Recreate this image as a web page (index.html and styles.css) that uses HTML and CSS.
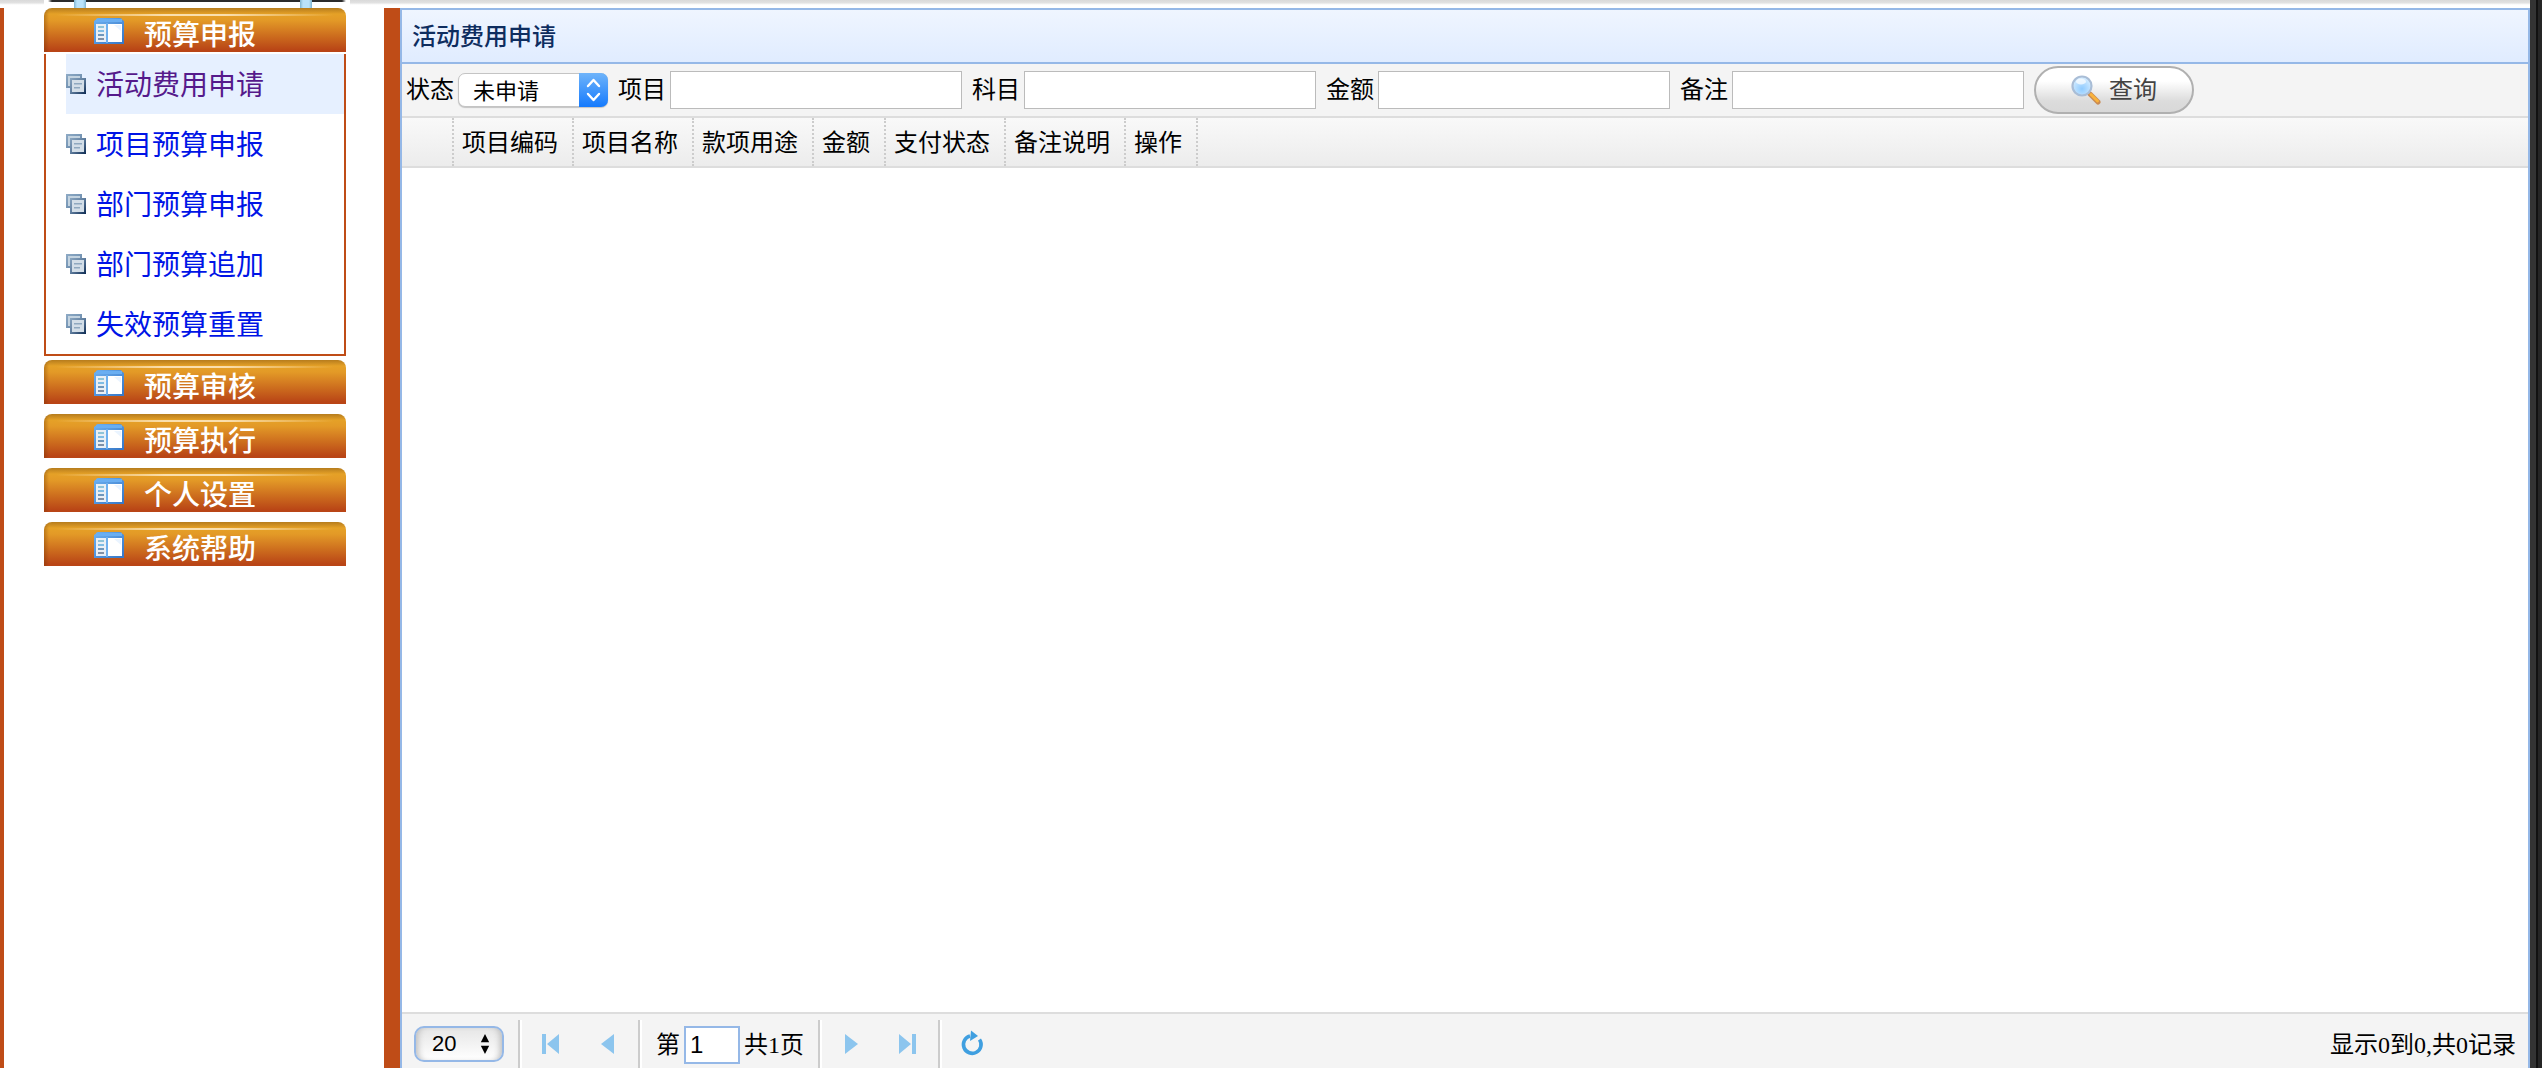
FILE: index.html
```
<!DOCTYPE html>
<html lang="zh-CN">
<head>
<meta charset="utf-8">
<title>活动费用申请</title>
<link rel="stylesheet" href="styles.css">
</head>
<body>
<svg class="defs" aria-hidden="true">
  <defs>
    <linearGradient id="win-frame" x1="0" y1="0" x2="1" y2="1">
      <stop offset="0" stop-color="#6db0f0"/><stop offset="1" stop-color="#3576c6"/>
    </linearGradient>
    <linearGradient id="page-back" x1="0" y1="0" x2="1" y2="1">
      <stop offset="0" stop-color="#8fabc6"/><stop offset="1" stop-color="#5f82a4"/>
    </linearGradient>
    <linearGradient id="page-front" x1="0" y1="0" x2="1" y2="1">
      <stop offset="0" stop-color="#8aa6c0"/><stop offset="0.450" stop-color="#6482a2"/><stop offset="1" stop-color="#0c2a52"/>
    </linearGradient>
    <radialGradient id="lens" cx="0.5" cy="0.65" r="0.6">
      <stop offset="0" stop-color="#8fcbff"/><stop offset="1" stop-color="#d4ecff"/>
    </radialGradient>
    <symbol id="icon-window" viewBox="0 0 30 26">
      <path d="M2 1.500Q2 0 4 0H26Q28 0 28 1.500L30 3V26H0V3Z" fill="url(#win-frame)"/>
      <path d="M2 1h26v3H2z" fill="#69aef2"/>
      <path d="M2 6h10v18H2z" fill="#e9eff5"/>
      <path d="M14 6h14v18H14z" fill="#fff"/>
      <path d="M12 5h2v20h-2z" fill="#6fb0ee"/>
      <path d="M20 7h7v6z" fill="#eaf4ff"/>
      <path d="M4 8h6v2H4z" fill="#8fc4d8"/><path d="M4 12h6v2H4z" fill="#7fbce4"/>
      <path d="M4 16h6v2H4z" fill="#6f97bc"/><path d="M4 20h6v2H4z" fill="#8090a6"/>
    </symbol>
    <symbol id="icon-pages" viewBox="0 0 20 20">
      <path d="M0 0h16v14H0z" fill="url(#page-back)"/>
      <path d="M2 2h12v10H2z" fill="#c3d3e0"/>
      <path d="M4 4h16v16H4z" fill="url(#page-front)"/>
      <path d="M6 6h12v12H6z" fill="#d3dee8"/>
      <path d="M8 9h8v1.500H8zM8 13h6v1.500H8z" fill="#8fa8bf"/>
    </symbol>
  </defs>
</svg>

<div class="page">
  <div class="workspace">
    <div class="topbar"><div class="hanger"><i></i><i></i></div></div>
    <div class="columns">
      <nav class="sidebar">
        <button class="group" type="button"><svg class="group-icon"><use href="#icon-window"/></svg>预算申报</button>
        <ul class="menu">
          <li class="active"><svg><use href="#icon-pages"/></svg><a class="visited" href="#apply">活动费用申请</a></li>
          <li><svg><use href="#icon-pages"/></svg><a href="#project">项目预算申报</a></li>
          <li><svg><use href="#icon-pages"/></svg><a href="#dept">部门预算申报</a></li>
          <li><svg><use href="#icon-pages"/></svg><a href="#append">部门预算追加</a></li>
          <li><svg><use href="#icon-pages"/></svg><a href="#reset">失效预算重置</a></li>
        </ul>
        <button class="group" type="button"><svg class="group-icon"><use href="#icon-window"/></svg>预算审核</button>
        <button class="group" type="button"><svg class="group-icon"><use href="#icon-window"/></svg>预算执行</button>
        <button class="group" type="button"><svg class="group-icon"><use href="#icon-window"/></svg>个人设置</button>
        <button class="group" type="button"><svg class="group-icon"><use href="#icon-window"/></svg>系统帮助</button>
      </nav>

      <main class="panel">
        <h1 class="panel-title">活动费用申请</h1>
        <form class="toolbar">
          <div class="field">
            <label for="status">状态</label>
            <span class="status-select">
              <select id="status"><option>未申请</option></select>
              <svg viewBox="0 0 29 34"><path d="M9 13l5.500-6 5.500 6M9 21l5.500 6 5.500-6" fill="none" stroke="#fff" stroke-width="2.400" stroke-linecap="round" stroke-linejoin="round"/></svg>
            </span>
          </div>
          <div class="field"><label for="project">项目</label><input id="project" type="text"></div>
          <div class="field"><label for="subject">科目</label><input id="subject" type="text"></div>
          <div class="field"><label for="amount">金额</label><input id="amount" type="text"></div>
          <div class="field"><label for="remark">备注</label><input id="remark" type="text"></div>
          <button class="search" type="button">
            <svg viewBox="0 0 30 30">
              <path d="M19 19L27 27" stroke="#c98a52" stroke-width="5" stroke-linecap="round"/>
              <path d="M20 19.500L26.500 26" stroke="#f9b33c" stroke-width="3" stroke-linecap="round"/>
              <circle cx="11" cy="11" r="9.500" fill="url(#lens)" stroke="#a9bdd6" stroke-width="2.200"/>
              <ellipse cx="10" cy="6.500" rx="5" ry="3" fill="#fff" opacity="0.700"/>
            </svg>查询</button>
        </form>
        <div class="grid">
          <table>
            <thead>
              <tr><th class="row-number"></th><th>项目编码</th><th>项目名称</th><th>款项用途</th><th>金额</th><th>支付状态</th><th>备注说明</th><th>操作</th></tr>
            </thead>
          </table>
        </div>
        <footer class="pager">
          <span class="size-select">
            <select aria-label="每页记录数"><option>20</option></select>
            <svg viewBox="0 0 10 24"><path d="M5 0l5 10H0zM5 24l5-10H0z" fill="#000"/></svg>
          </span>
          <div class="pager-group">
            <button type="button" aria-label="首页"><svg viewBox="0 0 32 32"><path d="M8 6h4v20H8zM25 6v20L13 16z"/></svg></button>
            <button type="button" aria-label="上一页"><svg viewBox="0 0 32 32"><path d="M22 6v20L9 16z"/></svg></button>
          </div>
          <div class="pager-group pager-page">
            <label for="page">第</label><input id="page" type="text" value="1"><span>共1页</span>
          </div>
          <div class="pager-group">
            <button type="button" aria-label="下一页"><svg viewBox="0 0 32 32"><path d="M11 6v20l13-10z"/></svg></button>
            <button type="button" aria-label="末页"><svg viewBox="0 0 32 32"><path d="M7 6v20l12-10zM20 6h4v20h-4z"/></svg></button>
          </div>
          <div class="pager-group">
            <button type="button" aria-label="刷新"><svg viewBox="0 0 32 32"><path d="M25.500 11.500A8.800 8.800 0 1 1 16 8" fill="none" stroke="#3f9fe0" stroke-width="3.600"/><path class="arrow" d="M17 2.500l7 5.500-8 5z"/></svg></button>
          </div>
          <span class="summary">显示0到0,共0记录</span>
        </footer>
      </main>
    </div>
  </div>
  <div class="edge"></div>
</div>
</body>
</html>
```
FILE: styles.css
```
* { box-sizing: border-box; }

body {
  margin: 0;
  background: #fff;
  color: #000;
  font-family: "Liberation Serif", "Noto Sans CJK SC", serif;
  font-size: 24px;
  line-height: 32px;
}

button, input, select { font: inherit; color: inherit; margin: 0; }

.defs { position: absolute; width: 0; height: 0; }

.page { display: flex; min-height: 100vh; }
.workspace { flex: 1; display: flex; flex-direction: column; min-width: 0; }

/* dark window edge on the right */
.edge {
  width: 12px;
  background: linear-gradient(90deg, #333 0 6px, #111 6px 8px, #252525 8px);
}

/* strip between the banner and the work area */
.topbar {
  height: 8px;
  padding-left: 44px;
  background: linear-gradient(#d9d9d9, #e2e2e2 3px, #f6f6f6 4px, #fff 5px);
}
.hanger {
  display: flex;
  justify-content: space-between;
  width: 306px;
  height: 8px;
  padding: 0 38px 0 30px;
  background: linear-gradient(90deg, #fff 4px, #2b2b2b 8px 298px, #fff 302px) 0 0 / 100% 2px no-repeat #fff;
}
.hanger i {
  width: 12px;
  background: linear-gradient(90deg, #7fb4cf, #b9e2fa 3px 9px, #7fb4cf);
}

.columns { flex: 1; display: flex; }

.sidebar {
  width: 400px;
  padding: 0 38px 0 40px;
  border-left: 4px solid #bf4c17;
  border-right: 16px solid #bf4c17;
}

.group {
  display: flex;
  align-items: center;
  gap: 20px;
  width: 100%;
  height: 44px;
  margin-bottom: 10px;
  padding: 12px 0 0 50px;
  border: 0;
  border-radius: 8px 8px 0 0;
  background:
    linear-gradient(90deg, transparent 12px, #fadfae 40%, #fadfae 60%, transparent 290px) 0 6px / 100% 2px no-repeat,
    linear-gradient(90deg, rgba(110, 50, 0, 0.35), transparent 5px),
    linear-gradient(#b67c1d, #e5a127 6px, #e39a27 12px, #b94516 42px);
  color: #fff;
  font-size: 28px;
  font-weight: 500;
  line-height: 32px;
  text-align: left;
}
.group-icon { width: 30px; height: 26px; margin-top: -10px; }

.menu {
  margin: -8px 0 4px;
  padding: 0 0 0 20px;
  border: 2px solid #bf4c17;
  border-top: 0;
  list-style: none;
}
.menu li {
  display: flex;
  align-items: center;
  gap: 10px;
  height: 60px;
  font-size: 28px;
}
.menu .active { background: #e6f0ff; }
.menu svg { width: 20px; height: 20px; }
.menu a { padding-top: 4px; color: #0014e6; text-decoration: none; }
.menu a.visited { color: #551a8b; }

.panel {
  flex: 1;
  display: flex;
  flex-direction: column;
  min-width: 0;
  border: solid #95b8e7;
  border-width: 2px 2px 0;
}
.panel-title {
  height: 54px;
  margin: 0;
  padding: 11px 10px 0;
  border-bottom: 2px solid #95b8e7;
  background: linear-gradient(#eff5ff, #e0ecff);
  color: #0e2d5f;
  font-size: 24px;
  font-weight: 500;
}

.toolbar {
  display: flex;
  align-items: center;
  gap: 10px;
  height: 54px;
  padding: 0 4px;
  border-bottom: 2px solid #ddd;
  background: #f4f4f4;
}
.field { display: flex; align-items: center; gap: 4px; white-space: nowrap; }
.field input {
  width: 292px;
  height: 38px;
  padding: 0 6px;
  border: 1px solid #bbb;
  background: #fff;
}

.status-select, .size-select { position: relative; display: flex; }
.status-select select {
  appearance: none;
  width: 150px;
  height: 34px;
  padding: 0 34px 2px 14px;
  border: 1px solid #c4c4c4;
  border-radius: 7px;
  background: #fff;
  box-shadow: 0 1px 1px rgba(0, 0, 0, 0.2);
  font-family: "Noto Sans CJK SC", sans-serif;
  font-size: 22px;
  line-height: 28px;
}
.status-select svg {
  position: absolute;
  top: 0;
  right: 0;
  width: 29px;
  height: 34px;
  border-radius: 0 7px 7px 0;
  background: linear-gradient(#6fb4fa, #157afd);
  pointer-events: none;
}

.search {
  display: flex;
  align-items: center;
  justify-content: center;
  gap: 8px;
  width: 160px;
  height: 48px;
  padding: 0;
  border: 2px solid #b0b0b0;
  border-radius: 24px;
  background: linear-gradient(#fff 30%, #dcdcdc 75%, #d8d8d8);
  color: #444;
}
.search svg { width: 30px; height: 30px; }

.grid { flex: 1; background: #fff; }
.grid table {
  display: block;
  height: 50px;
  border-spacing: 0;
  border-bottom: 2px solid #ddd;
  background: linear-gradient(#f9f9f9, #ececec);
}
.grid th {
  height: 48px;
  padding: 2px 14px 0 8px;
  border-right: 2px dotted #ccc;
  font-weight: 400;
  white-space: nowrap;
}
.grid .row-number { width: 52px; min-width: 52px; }

.pager {
  display: flex;
  align-items: center;
  height: 56px;
  padding: 6px 12px 0;
  border-top: 2px solid #ddd;
  background: #f4f4f4;
}
.size-select { margin-right: 14px; }
.size-select select {
  appearance: none;
  width: 90px;
  height: 36px;
  padding: 0 30px 0 16px;
  border: 2px solid #95b8e7;
  border-radius: 10px;
  background: linear-gradient(#e6e6e6, #fff);
  box-shadow: inset 6px 0 6px -4px #bbb, inset -6px 0 6px -4px #bbb;
  font-family: "Liberation Sans", sans-serif;
  font-size: 22px;
}
.size-select svg {
  position: absolute;
  top: 8px;
  right: 14px;
  width: 10px;
  height: 20px;
  pointer-events: none;
}
.pager-group {
  display: flex;
  align-items: center;
  gap: 26px;
  height: 48px;
  padding: 0 14px;
  border-left: 2px solid #ccc;
  box-shadow: inset 2px 0 #fff;
}
.pager-group button {
  width: 32px;
  height: 32px;
  padding: 0;
  border: 0;
  background: none;
}
.pager-group svg { display: block; width: 32px; height: 32px; fill: #8cc5ee; }
.pager-group .arrow { fill: #3f9fe0; }
.pager-page { gap: 4px; padding: 2px 14px 0 16px; }
.pager-page input {
  width: 56px;
  height: 38px;
  padding: 0 4px;
  border: 2px solid #95b8e7;
  background: #fff;
  font-family: "Liberation Sans", sans-serif;
}
.summary { margin-left: auto; padding-top: 2px; white-space: nowrap; }
```
